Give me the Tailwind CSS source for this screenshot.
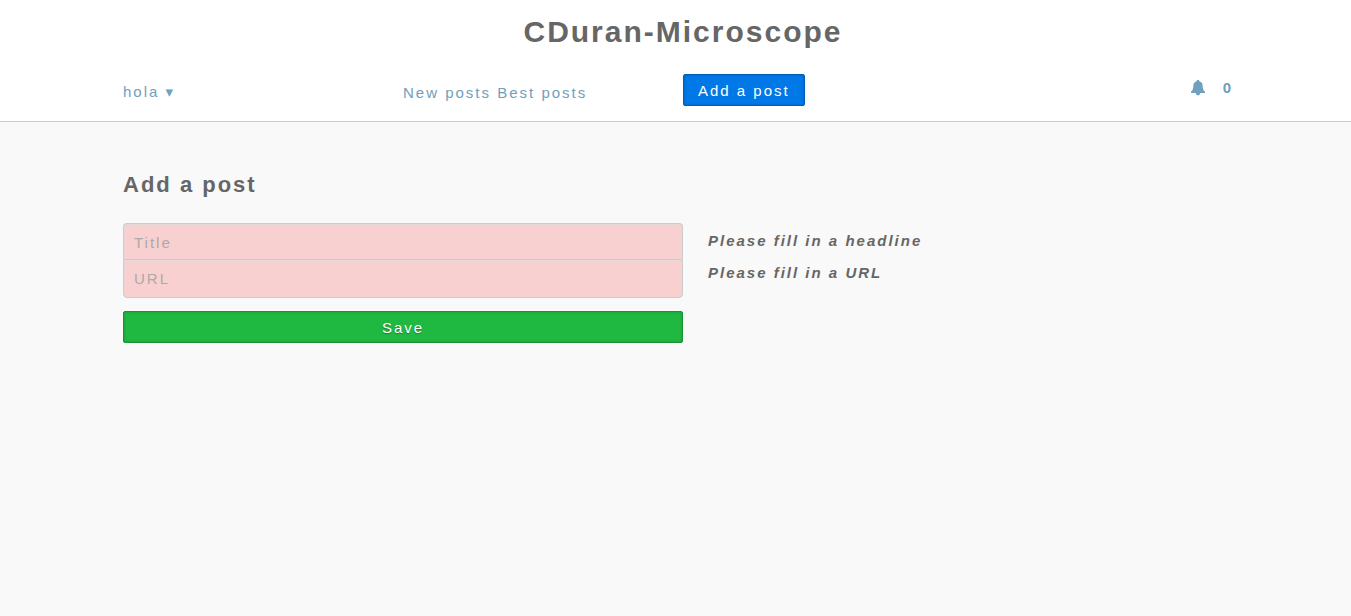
<!DOCTYPE html>
<html lang="en">
<head>
<meta charset="utf-8">
<meta name="viewport" content="width=device-width, initial-scale=1">
<title>CDuran-Microscope</title>
<script src="https://cdn.jsdelivr.net/npm/@tailwindcss/browser@4"></script>
</head>
<body class="min-h-screen bg-[#f9f9f9] font-['Liberation_Sans',Arial,sans-serif] text-[15px] leading-5 tracking-[2px] text-[#666]">
<header class="border-b border-[#ccc] bg-white">
  <div class="mx-auto max-w-[1135px] pt-3 pb-[15px] pl-[15px]">
    <h1 class="text-center text-[30px] leading-10 font-bold">CDuran-Microscope</h1>
    <nav class="mt-[22px] grid grid-cols-4 items-start text-[#6fa0bd]">
      <a href="#" class="mt-2">hola <span class="font-['DejaVu_Sans',sans-serif]">▾</span></a>
      <div class="mt-[9px] whitespace-nowrap"><a href="#">New posts</a> <a href="#">Best posts</a></div>
      <div><a href="#" class="inline-block h-8 rounded-xs border border-[#0060b8] bg-[#0078e7] px-3.5 pt-1.5 text-white inset-shadow-[0_0_3px_rgba(0,0,0,0.2)]">Add a post</a></div>
      <a href="#" class="mt-1 mr-2.5 flex items-center justify-end gap-[18px] font-bold" aria-label="Notifications: 0">
        <svg class="h-4 w-[14px]" viewBox="0 0 14 16" fill="currentColor" aria-hidden="true"><path d="M7 0C7.8 0 8.4.5 8.4 1.3C10.6 1.9 11.5 3.5 11.6 5.5C11.8 8.3 12 10 14 11.8V13H9.3C9 14.5 8.2 15.3 7 15.3C5.8 15.3 5 14.5 4.7 13H0V11.8C2 10 2.2 8.3 2.4 5.5C2.5 3.5 3.4 1.9 5.6 1.3C5.6.5 6.2 0 7 0Z"/></svg>
        <span>0</span>
      </a>
    </nav>
  </div>
</header>
<main class="mx-auto max-w-[1135px] pt-12 pl-[15px]">
  <h2 class="text-[22px] leading-[30px] font-bold">Add a post</h2>
  <form class="mt-[23px] grid grid-cols-2">
    <div>
      <input type="text" aria-label="Title" aria-describedby="title-error" placeholder="Title" class="block h-9 w-full rounded-t border border-b-0 border-[#ccc] bg-[#f8d0cf] px-2.5 pt-0.5 tracking-[2px] inset-shadow-[0_1px_3px_#ddd] placeholder:text-[#aaa]">
      <input type="text" aria-label="URL" aria-describedby="url-error" placeholder="URL" class="block h-[39px] w-full rounded-b border border-[#ccc] bg-[#f8d0cf] px-2.5 tracking-[2px] inset-shadow-[0_1px_3px_#ddd] placeholder:text-[#aaa]">
      <button type="submit" class="mt-[13px] block h-8 w-full rounded-xs border border-[#199334] bg-[#1fb841] pt-0.5 tracking-[2px] text-white inset-shadow-[0_0_3px_rgba(0,0,0,0.2)] text-shadow-[0_1px_1px_rgba(0,0,0,0.3)]">Save</button>
    </div>
    <div class="flex flex-col gap-3 pt-2 pl-[25px] font-bold italic">
      <p id="title-error">Please fill in a headline</p>
      <p id="url-error">Please fill in a URL</p>
    </div>
  </form>
</main>
</body>
</html>
